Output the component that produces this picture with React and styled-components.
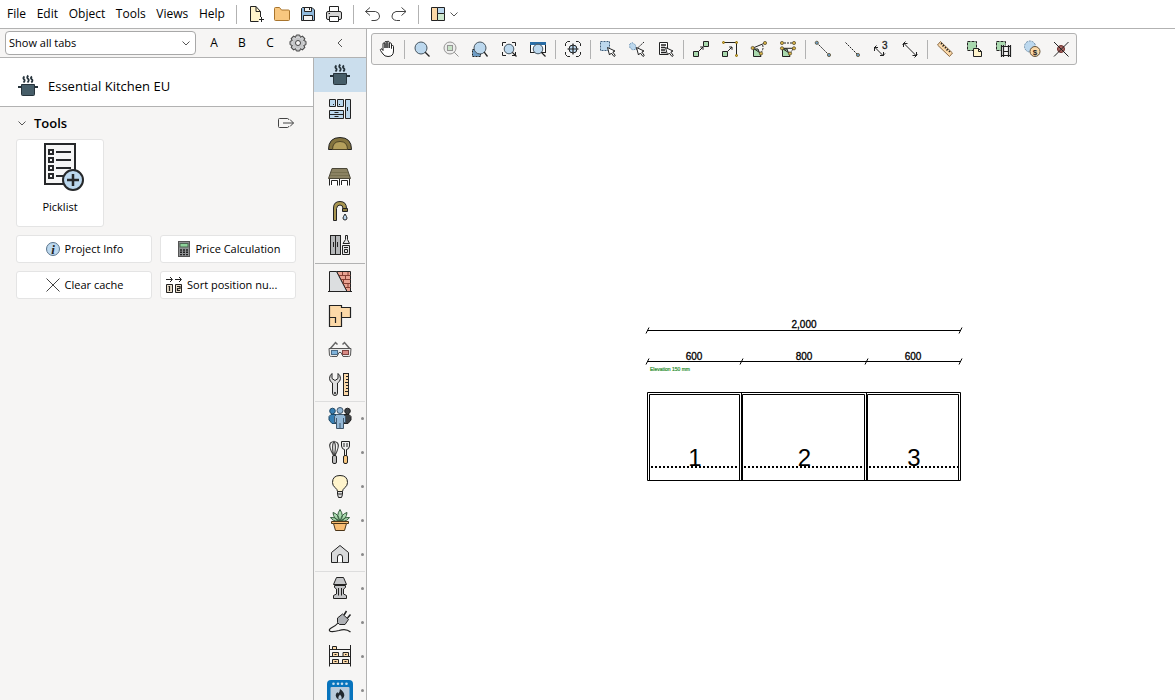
import React, { useState } from 'react';
import styled, { createGlobalStyle } from 'styled-components';

const GlobalStyle = createGlobalStyle`
  * {
    box-sizing: border-box;
  }

  body {
    margin: 0;
    background: #ffffff;
    color: #000000;
    font-family: 'Open Sans', 'Noto Sans', sans-serif;
    font-size: 12px;
    line-height: 16px;
  }

  button, select {
    font: inherit;
    color: inherit;
  }
`;

const AppContainer = styled.div`
  display: flex;
  flex-direction: column;
  height: 100vh;
  overflow: hidden;
`;

const MenuBar = styled.header`
  display: flex;
  align-items: center;
  flex: none;
  height: 29px;
  padding-left: 2px;
  border-bottom: 1px solid #b2b2b2;
  background: #ffffff;
`;

const MenuNav = styled.nav`
  display: flex;
  justify-content: space-between;
  flex: none;
  width: 228px;
`;

const MenuButton = styled.button`
  padding: 0 5px;
  border: none;
  background: none;
`;

const IconButton = styled.button`
  display: flex;
  align-items: center;
  justify-content: center;
  flex: none;
  width: ${({ $width }) => $width || 26}px;
  height: ${({ $height }) => $height || 26}px;
  padding: 0;
  border: none;
  background: none;

  svg {
    flex: none;
  }

  &:hover {
    background: #e2edf6;
  }
`;

const ToolbarButton = styled(IconButton)`
  justify-content: flex-start;
  padding-left: 5px;
`;

const BarDivider = styled.span`
  flex: none;
  width: 1px;
  height: 19px;
  margin: ${({ $tight }) => ($tight ? '0 2px 0 3px' : '0 6px')};
  background: #b2b2b2;
`;

const Workspace = styled.div`
  display: flex;
  flex: 1;
  min-height: 0;
`;

const SideArea = styled.aside`
  display: flex;
  flex-direction: column;
  flex: none;
  width: 367px;
  border-right: 1px solid #b2b2b2;
  background: #f6f5f4;
`;

const FilterBar = styled.div`
  display: flex;
  align-items: center;
  flex: none;
  height: 29px;
  padding-left: 5px;
  border-bottom: 1px solid #b2b2b2;
`;

const SelectBox = styled.div`
  display: grid;
  align-items: center;
  flex: none;
  width: 191px;
  margin-right: 4px;

  select, svg {
    grid-area: 1 / 1;
  }

  svg {
    justify-self: end;
    margin-right: 5px;
    pointer-events: none;
  }
`;

const TabSelect = styled.select`
  appearance: none;
  width: 100%;
  height: 24px;
  padding: 0 20px 0 3px;
  border: 1px solid #a8a8a8;
  border-radius: 4px;
  background: #ffffff;
  font-size: 11px;
`;

const LetterButton = styled.button`
  width: 28px;
  height: 24px;
  padding: 0;
  border: none;
  background: none;
  font-size: 12px;
`;

const FilterSpacer = styled.span`
  flex: 1;
`;

const SideBody = styled.div`
  display: flex;
  flex: 1;
  min-height: 0;
`;

const Panel = styled.section`
  display: flex;
  flex-direction: column;
  flex: 1;
  min-width: 0;
`;

const PanelTitle = styled.h1`
  display: flex;
  align-items: center;
  gap: 8px;
  height: 49px;
  margin: 0;
  padding: 8px 0 0 16px;
  border-bottom: 1px solid #b2b2b2;
  background: #ffffff;
  font-size: 13px;
  font-weight: 400;
`;

const ToolsSection = styled.div`
  padding: 0 17px 0 16px;
`;

const ToolsHeader = styled.div`
  display: flex;
  align-items: center;
  gap: 6px;
  height: 32px;

  h2 {
    flex: 1;
    margin: 0;
    font-size: 13px;
    font-weight: 600;
  }
`;

const TileButton = styled.button`
  display: flex;
  flex-direction: column;
  align-items: center;
  gap: 7px;
  width: 88px;
  height: 88px;
  padding: 2px 0 0;
  border: 1px solid #e4e4e4;
  border-radius: 3px;
  background: #ffffff;
  font-size: 11px;
`;

const ToolGrid = styled.div`
  display: grid;
  grid-template-columns: 1fr 1fr;
  gap: 8px;
  padding-top: 8px;
`;

const ToolButton = styled.button`
  display: flex;
  align-items: center;
  justify-content: ${({ $long }) => ($long ? 'flex-start' : 'center')};
  gap: 4px;
  min-width: 0;
  height: 28px;
  padding: 0 4px;
  border: 1px solid #e4e4e4;
  border-radius: 3px;
  background: #ffffff;
  font-size: 11px;
  white-space: nowrap;

  svg {
    flex: none;
  }
`;

const TabRail = styled.nav`
  display: flex;
  flex-direction: column;
  flex: none;
  width: 53px;
  border-left: 1px solid #b2b2b2;
  overflow: hidden;
`;

const RailButton = styled.button`
  display: grid;
  grid-template-columns: 14px 24px 14px;
  align-items: center;
  justify-items: center;
  flex: none;
  height: 34px;
  padding: 0;
  border: none;
  background: ${({ $active }) => ($active ? '#cbdeed' : 'none')};

  svg {
    grid-column: 2;
    overflow: visible;
  }
`;

const RailDot = styled.i`
  grid-column: 3;
  width: 3px;
  height: 3px;
  margin-left: 6px;
  border-radius: 50%;
  background: #8a8a8a;
`;

const RailDivider = styled.span`
  flex: none;
  height: 1px;
  margin: ${({ $strong }) => ($strong ? '1px 1px' : '0 1px -1px')};
  background: ${({ $strong }) => ($strong ? '#b2b2b2' : '#dddddd')};
`;

const Canvas = styled.main`
  display: flex;
  flex-direction: column;
  align-items: flex-start;
  flex: 1;
  min-width: 0;
  padding: 4px;
`;

const Toolbar = styled.div`
  display: flex;
  align-items: center;
  height: 32px;
  padding-right: 1px;
  border: 1px solid #b2b2b2;
  border-radius: 3px;
  background: #f6f5f4;
`;

const DrawingArea = styled.div`
  padding: 250px 0 0 269px;

  svg {
    display: block;
  }
`;

const INK = '#222222';
const BLUE = '#bcd8ee';
const GREEN = '#a9d9ae';
const SAND = '#fcd9a8';
const GOLD = '#d9b445';

const Svg = ({ size = 20, children, ...rest }) => (
  <svg width={size} height={size} viewBox={`0 0 ${size} ${size}`} fill="none" stroke={INK} strokeWidth="1" aria-hidden="true" {...rest}>
    {children}
  </svg>
);

const Chevron = ({ d = 'M1.5 3.5L5 7L8.5 3.5' }) => (
  <Svg size={10} stroke="#555555"><path d={d} /></Svg>
);

const Cursor = () => (
  <path d="M9.5 8.5L11.5 16L13.3 14L16 17.5L17.3 16.5L14.8 13L17 12Z" fill="#ffffff" />
);

/* menu bar icons, 20 x 20 */
const menuIcons = {
  'New': (
    <>
      <path d="M14.5 13V7.5L10 2.5H4.5V17.5H12.5" fill="#fff4cc" />
      <path d="M10 2.5V7.5H14.5M15.5 13V18M13 15.5H18" />
    </>
  ),
  'Open': <path d="M2.5 4.5Q2.5 3.5 3.5 3.5H7.5L9.5 6H16.5Q17.5 6 17.5 7V15.5Q17.5 16.5 16.5 16.5H3.5Q2.5 16.5 2.5 15.5Z" fill="#f8c77f" stroke="#a8742c" />,
  'Save': (
    <>
      <path d="M3.5 4.5L4.5 3.5H14L16.5 6V16.5H3.5Z" fill="#8fb9dc" />
      <path d="M6.5 3.5H13.5V7.5H6.5ZM5.5 11.5H14.5V16.5H5.5Z" fill="#f3f3f3" />
      <path d="M11.5 4V6" />
    </>
  ),
  'Print': (
    <>
      <path d="M5.5 8V2.5H14.5V8" fill="#ffffff" />
      <rect x="2.5" y="7.5" width="15" height="8" rx="1.5" fill="#d5d5d5" />
      <path d="M5.5 12.5H14.5V17.5H5.5Z" fill="#ffffff" />
      <path d="M4.5 9.5H6" />
    </>
  ),
  'Undo': <path d="M7 3.5L2.5 7.5L7 11.5M2.5 7.5H12.5Q16.5 8.5 16.5 12Q16.5 16 12 16.5H8.5" stroke="#444444" />,
  'Redo': <path d="M12.5 3.5L17 7.5L12.5 11.5M17 7.5H7Q3 8.5 3 12Q3 16 7.5 16.5H11" stroke="#444444" />,
  'Layout': (
    <>
      <path d="M3.5 3.5H9.5V16.5H3.5Z" fill={SAND} />
      <path d="M9.5 3.5H16.5V9.5H9.5Z" fill={BLUE} />
      <path d="M9.5 9.5H16.5V16.5H9.5Z" fill="#cfe9d0" />
    </>
  ),
};

const Lens = ({ cx = 9, cy = 9, r = 6 }) => (
  <>
    <circle cx={cx} cy={cy} r={r} fill={BLUE} stroke="#46545f" />
    <path d={`M${cx + r * 0.7} ${cy + r * 0.7}L17.5 17.5`} strokeWidth="1.3" />
  </>
);

const Point = ({ x, y, fill = GOLD }) => <circle cx={x} cy={y} r="1.6" fill={fill} stroke="#5c5132" strokeWidth="0.8" />;

const HAND = 'M6 11.5V5Q6 3.8 7 3.8T8 5V9V3.5Q8 2.3 9 2.3T10 3.5V9V3.2Q10 2.2 11 2.2T12.2 3.2V9V4.8Q12.2 3.8 13.2 3.8T14.5 4.8V9.5V7.5Q14.5 6.5 15.5 6.5T16.5 7.5V12Q16.5 17.5 11 17.5Q7.5 17.5 6 15L3.5 11.5Q3 10.3 4 9.8Q5 9.5 6 11.5Z';

/* drawing toolbar, grouped between dividers */
const toolGroups = [
  [['Pan', <path d={HAND} fill="#ffffff" />]],
  [
    ['Zoom', <Lens />],
    ['Zoom selection', (
      <g opacity="0.45">
        <circle cx="9" cy="9" r="6" fill="#e4e4e4" />
        <rect x="6.5" y="6.5" width="5" height="5" fill="#8fce8f" />
        <path d="M13.2 13.2L17.5 17.5" />
      </g>
    )],
    ['Zoom area', (
      <>
        <rect x="2.5" y="10.5" width="8" height="7" fill="#6d9cc4" strokeDasharray="2 1" />
        <Lens cx={10} />
      </>
    )],
    ['Zoom to fit', (
      <>
        <path d="M3.5 7V3.5H7M13 3.5H16.5V7M3.5 13V16.5H7M13 16.5H16.5V13" />
        <Lens cx={10} cy={10} r={4.8} />
      </>
    )],
    ['Zoom window', (
      <>
        <rect x="2.5" y="3.5" width="15" height="10" fill="#ffffff" />
        <path d="M2 4.5H18" stroke="#2b6ea6" strokeWidth="3" />
        <Lens cx={10} cy={10} r={4.8} />
      </>
    )],
  ],
  [['Center view', (
    <>
      <path d="M2.5 7V4.5L4.5 2.5H7M13 2.5H15.5L17.5 4.5V7M2.5 13V15.5L4.5 17.5H7M13 17.5H15.5L17.5 15.5V13" />
      <circle cx="10" cy="10" r="4" fill={BLUE} />
      <path d="M10 4.5V15.5M4.5 10H15.5" strokeWidth="1.2" />
    </>
  )]],
  [
    ['Select by frame', (
      <>
        <rect x="2.5" y="2.5" width="9" height="9" fill={BLUE} stroke="#3f5f7c" strokeDasharray="2 1" />
        <Cursor />
      </>
    )],
    ['Select by line', (
      <>
        <path d="M2.5 5.5L5 3.5L8.5 6L9 10L6 11L3 9Z" fill={BLUE} stroke="#7297b8" strokeDasharray="2 1" />
        <path d="M9 10.5L17 3" strokeDasharray="2 1" />
        <Cursor />
      </>
    )],
    ['Select from list', (
      <>
        <path d="M3.5 3.5H11.5V15.5H3.5Z" fill="#ffffff" />
        <path d="M5 6H10M5 8.5H9M5 11H9M5 13.5H10" strokeWidth="1.3" />
        <Cursor />
      </>
    )],
  ],
  [
    ['Move', (
      <>
        <path d="M2.5 12.5H7.5V17.5H2.5ZM12.5 2.5H17.5V7.5H12.5Z" fill={GREEN} />
        <path d="M7.5 12.5L12 8M9.2 8H12V10.8" />
      </>
    )],
    ['Move to corner', (
      <>
        <path d="M2.5 12.5H7.5V17.5H2.5Z" fill={GREEN} />
        <path d="M7.5 12.5L12 8M9.2 8H12V10.8M3.5 3.5H16.5V16.5" />
        <circle cx="3.5" cy="3.5" r="1" fill={GOLD} stroke="#8a6a00" />
        <circle cx="16.5" cy="3.5" r="1" fill={GOLD} stroke="#8a6a00" />
        <circle cx="16.5" cy="16.5" r="1" fill={GOLD} stroke="#8a6a00" />
      </>
    )],
    ['Rotate', (
      <>
        <path d="M4.5 10V17.5H12L9 10Z" fill={GREEN} />
        <path d="M4 9L16 4M4 9L12 14.5" />
        <path d="M13.5 6Q15 9 12.5 13" strokeDasharray="2 1" />
        <Point x={3.7} y={9} /><Point x={16} y={4} /><Point x={12} y={14.5} />
      </>
    )],
    ['Rotate and move', (
      <>
        <path d="M4.5 10V17.5H12L9 10Z" fill={GREEN} />
        <path d="M4 9.3H16M4 9.3L12 14.5" />
        <path d="M6 4H14M15 10L12.5 14" strokeDasharray="2 1" />
        <Point x={4} y={4} /><Point x={16} y={4} /><Point x={4} y={9.3} /><Point x={16} y={9.3} /><Point x={12} y={14.5} />
      </>
    )],
  ],
  [
    ['Line', (
      <>
        <path d="M4 4L16 16" strokeDasharray="2 1" />
        <Point x={3.8} y={3.8} fill="#6d9cc4" /><Point x={16} y={16} fill="#6d9cc4" />
      </>
    )],
    ['Line to point', (
      <>
        <path d="M3.5 3.5L16 16" strokeDasharray="2 1" />
        <Point x={16} y={16} fill="#6d9cc4" />
      </>
    )],
    ['Three measures', (
      <>
        <path d="M4 8.5L12 16.5M3.5 12V8.5H7M12.5 13V16.5H9M5.5 6.5L3 9M14 14.5L11.5 17" />
        <text x="11" y="10" fontFamily="Liberation Sans, sans-serif" fontSize="10" fill={INK} strokeWidth="0.3">3</text>
      </>
    )],
    ['Measure', <path d="M4 4.5L16 16.5M3.5 8V4.5H7.5M16.5 13V16.5H12.5M5.5 2.5L2.5 5.5M17.5 15.5L14.5 18.5" />],
  ],
  [
    ['Ruler', (
      <>
        <path d="M5.5 2.5L17.5 14L14.5 17.5L2.5 6Z" fill={SAND} stroke="#8a6a45" />
        <path d="M7 4L5.8 5.3M9 6L7.5 7.5M11 8L9.8 9.3M13 9.8L11.5 11.5M15 11.8L13.8 13" strokeWidth="1.2" />
      </>
    )],
    ['Copy area', (
      <>
        <rect x="3.5" y="2.5" width="9" height="9" fill={GREEN} strokeDasharray="3 1" />
        <path d="M9.5 9.5H14.5L17.5 12.5V17.5H9.5Z" fill="#fff4cc" />
        <path d="M14.5 9.5V12.5H17.5" />
      </>
    )],
    ['Copy to film', (
      <>
        <rect x="3.5" y="2.5" width="9" height="9" fill={GREEN} strokeDasharray="3 1" />
        <path d="M8 6.5H18V17.5H8Z" fill="#f6f5f4" stroke="none" />
        <path d="M8.5 6V18M10.5 6V18M15.5 6V18M17.5 6V18M8.5 7.5H17.5M10.5 12.5H15.5M8.5 16.5H17.5" strokeWidth="1.2" />
      </>
    )],
    ['Area price', (
      <>
        <circle cx="8" cy="7.5" r="5.5" fill={BLUE} stroke="#6f8ea8" strokeDasharray="2 1" />
        <circle cx="13" cy="12.5" r="5" fill={SAND} stroke="#66533a" />
        <text x="13" y="15.5" textAnchor="middle" fontFamily="Liberation Sans, sans-serif" fontSize="8" fontWeight="700" fill={INK} stroke="none">$</text>
      </>
    )],
    ['Delete point', (
      <>
        <circle cx="10" cy="10" r="3.5" fill="#a96561" stroke="#6b2b28" />
        <path d="M3 3L17.5 17.5M17.5 3L3 17.5" />
      </>
    )],
  ],
];

const PotIcon = () => (
  <>
    <path d="M8.5 2.5Q6.5 4 8 5.2T7.5 8.5M12.3 1.5Q10.3 3.5 12 4.8T11.5 8.5M16 2.5Q14 4 15.7 5.2T15.3 8.5" strokeWidth="1.8" stroke="#26333b" />
    <path d="M2 13H22" stroke="#26333b" strokeWidth="2" />
    <path d="M5.5 10.5H18.5V20.5Q18.5 21.5 17.5 21.5H6.5Q5.5 21.5 5.5 20.5Z" fill="#465d68" stroke="#26333b" />
  </>
);

/* catalogue tabs, 24 x 24; a plain string is a divider */
const railItems = [
  ['Kitchen', <PotIcon />],
  ['Cabinets', (
    <>
      <path d="M1.5 2.5H7.5V9.5H1.5ZM9.5 2.5H15.5V9.5H9.5ZM17.5 2.5H22.5V21.5H17.5ZM1.5 13.5H15.5V21.5H1.5Z" fill={BLUE} />
      <path d="M1.5 17.5H15.5M6.5 15.5H10.5M6.5 19.5H10.5M5.5 7V8M11.5 7V8M19.5 10V14" />
    </>
  )],
  ['Worktops', (
    <>
      <path d="M0.5 18.5Q0.5 6.5 12 6.5T23.5 18.5Z" fill="#84743f" />
      <path d="M4.5 18.5Q4.5 10.5 12 10.5T19.5 18.5Z" fill="#b5a05c" stroke="#4e4425" />
    </>
  )],
  ['Hoods', (
    <>
      <path d="M2 14H21V20.5H2Z" fill="#ffffff" stroke="none" />
      <path d="M4 3.5H19L22.5 13.5H0.5Z" fill="#8b8263" stroke="#4b4738" />
      <path d="M3 7.5H20M2 10.5H21" stroke="#777050" />
      <path d="M1.5 14V20.5M11.5 14V20.5M21.5 14V20.5M3.5 20V15.5H9.5V20.5M13.5 20V15.5H19.5V20.5" />
    </>
  )],
  ['Taps', (
    <>
      <path d="M5.5 21.5V9Q5.5 2.5 12 2.5T18.5 9.5H15Q15 6 12 6T8.5 9.5V21.5Z" fill="#a89550" />
      <path d="M14.5 9.5H19.5V12.5H14.5Z" fill="#8b7a3d" />
      <path d="M17 15Q19 18 19 19A2 2 0 0 1 15 19Q15 18 17 15Z" fill={BLUE} />
    </>
  )],
  ['Appliances', (
    <>
      <rect x="2.5" y="2.5" width="10" height="19" fill="#b5b7b9" />
      <path d="M7.5 2.5V21.5M5.5 9V14M9.5 9V14" />
      <path d="M17.5 2.5H19.5V6.5L21.5 10.5H15L17.5 6.5ZM14.5 12.5H21.5V21.5H14.5Z" fill="#e5e5e5" />
      <path d="M16.5 16.5H19.5V19.5H16.5ZM16 14.5H20" />
    </>
  )],
  'strong',
  ['Walls', (
    <>
      <path d="M8.5 1.5H22.5V21.5H19Z" fill="#e9a392" />
      <path d="M1.5 1.5H8.5L19 21.5H1.5Z" fill="#dcdee0" />
      <path d="M10.5 5.5H22.5M12.5 9.5H22.5M14.5 13.5H22.5M17 17.5H22.5M14.5 2V5.5M17.5 5.5V9.5M15.5 9.5V13.5M20 13.5V17.5M20 2V5.5" stroke="#863f32" />
      <path d="M0 21.5H24" />
    </>
  )],
  ['Floor plan', <path d="M1.5 1.5H13.5V3.5H22.5V13.5H13.5V22.5H1.5ZM13.5 8V14M2 13.5H7.5V19" fill={SAND} strokeWidth="1.2" />],
  ['3D view', (
    <>
      <path d="M2 11L7.5 4.5L9.5 6.5M22 11L16.5 4.5L14.5 6.5" stroke="#666666" strokeWidth="1.5" />
      <path d="M1 10.5H23L22.5 17.5Q22 18.5 20.5 18.5H15L13 14.5H11L9 18.5H3.5Q2 18.5 1.5 17.5Z" fill="#e8e8e8" stroke="#555555" />
      <rect x="3.5" y="12.5" width="6" height="4" fill="#80b4dc" stroke="#4a6a85" />
      <rect x="14.5" y="12.5" width="6" height="4" fill="#d98a84" stroke="#7d4340" />
    </>
  )],
  ['Settings', (
    <>
      <path d="M4 1.5V6.5L7 8.5L10 6.5V1.5Q12.5 3.5 12.5 6.5Q12.3 9.5 9.5 11V21Q9.5 23.5 7 23.5T4.5 21V11Q1.5 9.5 1.5 6.5T4 1.5Z" fill="#dedede" />
      <circle cx="7" cy="21" r="0.7" />
      <rect x="15.5" y="1.5" width="5" height="22" fill={SAND} />
      <path d="M18 4.5H20.5M18 7.5H20.5M17 10.5H20.5M18 13.5H20.5M18 16.5H20.5M17 19.5H20.5" />
    </>
  )],
  'light',
  ['People', (
    <>
      <circle cx="4.5" cy="5" r="2.8" fill="#387fb3" stroke="#1f4966" />
      <circle cx="19.5" cy="5" r="2.8" fill="#3c3f42" />
      <path d="M3 8.5H9V17.5H4L1 14V10.5Z" fill="#387fb3" stroke="#1f4966" />
      <path d="M15 8.5H21L23 10.5V14L20 17.5H15Z" fill="#3c3f42" />
      <path d="M8.5 8.5H15.5L17.5 10.5V16.5H15.5V22.5H8.5V16.5H6.5V10.5Z" fill="#94b8d6" stroke="#40566a" />
      <circle cx="12" cy="4.5" r="3" fill="#94b8d6" stroke="#40566a" />
      <path d="M12 17V22.5M8.5 12V16.5M15.5 12V16.5" stroke="#40566a" />
    </>
  ), true],
  ['Utensils', (
    <>
      <path d="M5.5 15.5Q0 6 2.5 3Q6 0 9.5 3Q12 6 7 15.5M5.5 15Q3.5 5 6 1.5Q8.5 5 6.5 15" stroke="#444444" strokeWidth="1.2" />
      <rect x="4.5" y="15.5" width="4" height="8" rx="1.5" fill="#bcbcbc" />
      <path d="M13.5 1.5H21.5V6Q21 9.5 18.5 9.5V15.5H16.5V9.5Q14 9.5 13.5 6ZM16 3V7M19 3V7" fill="#eeeeee" />
      <rect x="15.5" y="15.5" width="4" height="8" rx="1.5" fill="#f8c77f" />
    </>
  ), true],
  ['Lighting', (
    <>
      <path d="M9.5 17.5Q9.5 15.5 7 13.5Q4.5 11.5 4.5 8.5Q4.5 1.5 12 1.5T19.5 8.5Q19.5 11.5 17 13.5Q14.5 15.5 14.5 17.5Z" fill="#fff4cc" />
      <path d="M9.5 17.5H14.5V20.5L13.5 23.5H10.5L9.5 20.5ZM9.5 20H14.5" fill="#dedede" />
    </>
  ), true],
  ['Plants', (
    <>
      <path d="M12 13Q7.5 8 12 1.5Q16.5 8 12 13ZM11 13Q5.5 11 5 4.5Q10.5 6 11.5 12.5ZM13 13Q18.5 11 19 4.5Q13.5 6 12.5 12.5ZM10 13Q5 13.5 2.5 9.5Q7 8.5 10.5 12.5ZM14 13Q19 13.5 21.5 9.5Q17 8.5 13.5 12.5Z" fill={GREEN} stroke="#355b3d" />
      <path d="M3.5 13.5H20.5V15.5H18.5L16.5 22.5H7.5L5.5 15.5H3.5ZM5.5 15.5H18.5" fill="#f8bd73" stroke="#4b3417" />
    </>
  ), true],
  ['Building', (
    <>
      <path d="M12 3.5L3.5 10.5V20.5H20.5V10.5Z" fill="#d9dadb" />
      <path d="M9.5 20.5V15A2.5 2.5 0 0 1 14.5 15V20.5" fill="#ffffff" />
    </>
  ), true],
  'light',
  ['Furniture legs', (
    <>
      <path d="M6.5 9.5H17.5V11.5L15.5 13V18L18.5 19.5V22.5H5.5V19.5L8.5 18V13L6.5 11.5Z" fill="#c6c7c9" />
      <path d="M8.5 1.5H15.5L18.5 8.5H5.5Z" fill="#c6c7c9" />
      <path d="M10.5 12V19.5M13.5 12V19.5" />
    </>
  ), true],
  ['Electric', (
    <>
      <path d="M9.5 8L14.5 4L20.5 9.5L17 14.5H11.5L9.5 12.5Z" fill="#aeb0b4" />
      <path d="M16 5L18.5 1M19.5 8L22.5 4.5" strokeWidth="1.5" />
      <path d="M10 13Q8 15.5 4 17.5Q-0.5 20 2.5 21.5Q6 22 11 20.5Q18 18 22.5 22" strokeWidth="1.2" />
    </>
  ), true],
  ['Shelving', (
    <>
      <path d="M4.5 2.5H8.5V5.5H4.5ZM4.5 8.5H10.5V12.5H4.5ZM15 8.5H20.5V12.5H15ZM4.5 15.5H10.5V19.5H4.5ZM14.5 15.5H20.5V19.5H14.5Z" fill={SAND} />
      <path d="M1.5 1V22.5M22.5 1V22.5M1.5 5.5H22.5M1.5 12.5H22.5M1.5 19.5H22.5" />
      <path d="M6.5 10.5H8.5M17 10.5H18.5M6.5 17.5H8.5M16.5 17.5H18.5" />
    </>
  ), true],
  ['Fire', (
    <>
      <rect x="-1" y="2" width="26" height="24" rx="4" fill="#0874bd" stroke="none" />
      {[5.5, 10, 14, 18.5].map((x) => (
        <circle key={x} cx={x} cy="5.8" r="1.3" fill="#c7dff0" stroke="none" />
      ))}
      <rect x="2.5" y="9" width="19" height="16" rx="1" fill="#b9cadb" stroke="none" />
      <path d="M12 11Q16.5 14 16.3 17.5Q15.5 21.5 12 21.5T7.7 17.5Q7.5 15.5 9.5 14L10 15.5Q12 14 12 11Z" fill="#20272e" stroke="none" />
      <path d="M12 16.5Q14 18.5 13.5 21H10.5Q10 18.5 12 16.5Z" fill="#b9cadb" stroke="none" />
    </>
  ), true],
];

const teeth = [0, 45, 90, 135, 180, 225, 270, 315];

const GearIcon = () => (
  <Svg size={18}>
    {teeth.map((a) => (
      <path key={a} d="M6.5 3.5L7.3 1H10.7L11.5 3.5" fill="#c4c5c7" stroke="#444444" transform={`rotate(${a} 9 9)`} />
    ))}
    <circle cx="9" cy="9" r="5.6" fill="#c4c5c7" stroke="none" />
    <circle cx="9" cy="9" r="2.5" fill="#f6f5f4" stroke="#444444" />
  </Svg>
);

const PicklistIcon = () => (
  <svg width="48" height="50" viewBox="0 0 48 50" fill="none" stroke="#26282a" strokeWidth="2" aria-hidden="true">
    <path d="M9 2H39V42H9Z" fill="#f6f6f6" />
    {[8, 16, 24, 32].map((y) => (
      <g key={y}>
        <rect x="13" y={y} width="4" height="4" />
        <path d={`M20 ${y + 2}H35`} />
      </g>
    ))}
    <circle cx="37" cy="38" r="10" fill={BLUE} />
    <path d="M37 32V44M31 38H43" strokeWidth="2.5" />
  </svg>
);

const gridTools = [
  ['Project Info', (
    <Svg size={16}>
      <circle cx="8" cy="8" r="6.5" fill={BLUE} stroke="#59748c" />
      <text x="8" y="12.5" textAnchor="middle" fontFamily="Liberation Serif, serif" fontStyle="italic" fontWeight="700" fontSize="13" fill={INK} stroke="none">i</text>
    </Svg>
  )],
  ['Price Calculation', (
    <Svg size={16}>
      <rect x="2.5" y="0.5" width="11" height="15" fill="#8f9193" stroke="#555555" />
      <rect x="4" y="2.5" width="8" height="3.5" fill="#8ed39a" stroke="#4e6653" />
      <path d="M4 9H12M4 11.3H12M4 13.6H12" strokeDasharray="2 1" strokeWidth="1.4" />
    </Svg>
  )],
  ['Clear cache', <Svg size={16}><path d="M1.5 1.5L14.5 14.5M14.5 1.5L1.5 14.5" stroke="#444444" /></Svg>],
  ['Sort position nu...', (
    <Svg size={18}>
      <path d="M1 3.5H7M5 1L7.5 3.5L5 6M10 3.5H16M14 1L16.5 3.5L14 6" />
      <path d="M1.5 8.5H7.5V16.5H1.5ZM10.5 8.5H16.5V16.5H10.5Z" fill="#eadfcb" />
      <path d="M3.5 10.5H4.5V15M12 10.5H15V12.5H12.5V14.5H15" strokeWidth="1.2" />
    </Svg>
  ), true],
];

/* inset: gap between a cabinet's outer and inner left edge */
const cabinets = [
  { no: 1, x: 7, width: 94, inset: 2 },
  { no: 2, x: 101, width: 125, inset: 1 },
  { no: 3, x: 226, width: 94, inset: 1 },
];

const Elevation = () => (
  <svg width="330" height="170" viewBox="0 0 330 170" fill="none" stroke="#000000" fontFamily="Liberation Sans, Arial, sans-serif" role="img" aria-label="Wall elevation">
    <path d="M7.5 15.5H320.5M7.5 46.5H320.5" />
    {[[7.5, 15.5], [320.5, 15.5], [7.5, 46.5], [101.5, 46.5], [226.5, 46.5], [320.5, 46.5]].map(([x, y]) => (
      <path key={`${x}-${y}`} d={`M${x - 1.5} ${y + 3}L${x + 1.5} ${y - 3}`} />
    ))}
    <g fill="#000000" strokeWidth="0.3" fontSize="10" textAnchor="middle">
      <text x="164" y="13">2,000</text>
      <text x="54" y="45">600</text>
      <text x="164" y="45">800</text>
      <text x="273" y="45">600</text>
    </g>
    <text x="10" y="56" fontSize="5" fill="#2b8f30" stroke="#2b8f30" strokeWidth="0.2">Elevation 150 mm</text>
    <path d="M7.5 165.5V77.5H320.5V165.5Z" />
    {cabinets.map(({ no, x, width, inset }) => (
      <g key={no}>
        <path d={`M${x + 0.5} 78V165M${x + inset + 0.5} 165V79.5H${x + width - 1.5}V165`} />
        <path d={`M${x + inset + 2} 152H${x + width - 2}`} strokeWidth="2" strokeDasharray="2 2" />
        <text x={x + width / 2 + 1} y="151" fontSize="24" textAnchor="middle" fill="#000000" stroke="none">{no}</text>
      </g>
    ))}
  </svg>
);

const menuButton = (name) => (
  <IconButton key={name} aria-label={name}>
    <Svg>{menuIcons[name]}</Svg>
  </IconButton>
);

const App = () => {
  const [activeTab, setActiveTab] = useState('Kitchen');

  return (
    <AppContainer>
      <GlobalStyle />
      <MenuBar>
        <MenuNav>
          {['File', 'Edit', 'Object', 'Tools', 'Views', 'Help'].map((name) => (
            <MenuButton key={name}>{name}</MenuButton>
          ))}
        </MenuNav>
        <BarDivider />
        {['New', 'Open', 'Save', 'Print'].map(menuButton)}
        <BarDivider />
        {['Undo', 'Redo'].map(menuButton)}
        <BarDivider />
        {menuButton('Layout')}
        <IconButton $width={6} aria-label="Layout options"><Chevron /></IconButton>
      </MenuBar>

      <Workspace>
        <SideArea>
          <FilterBar>
            <SelectBox>
              <TabSelect aria-label="Tab filter">
                <option>Show all tabs</option>
              </TabSelect>
              <Chevron />
            </SelectBox>
            {['A', 'B', 'C'].map((letter) => (
              <LetterButton key={letter}>{letter}</LetterButton>
            ))}
            <IconButton $width={28} aria-label="Filter settings"><GearIcon /></IconButton>
            <FilterSpacer />
            <IconButton $width={52} aria-label="Collapse"><Chevron d="M7 1L3 5L7 9" /></IconButton>
          </FilterBar>

          <SideBody>
            <Panel>
              <PanelTitle>
                <Svg size={24}><PotIcon /></Svg>
                Essential Kitchen EU
              </PanelTitle>
              <ToolsSection>
                <ToolsHeader>
                  <IconButton $width={12} $height={20} aria-label="Fold tools"><Chevron /></IconButton>
                  <h2>Tools</h2>
                  <IconButton $width={20} $height={20} aria-label="Detach tools">
                    <Svg stroke="#444444">
                      <path d="M12.5 7V6.5Q12.5 5.5 11.5 5.5H3.5Q2.5 5.5 2.5 6.5V13.5Q2.5 14.5 3.5 14.5H11.5Q12.5 14.5 12.5 13.5V13M7 10H17.5M14 6.5L17.5 10L14 13.5" />
                    </Svg>
                  </IconButton>
                </ToolsHeader>
                <TileButton>
                  <PicklistIcon />
                  Picklist
                </TileButton>
                <ToolGrid>
                  {gridTools.map(([name, icon, long]) => (
                    <ToolButton key={name} $long={long}>
                      {icon}
                      <span>{name}</span>
                    </ToolButton>
                  ))}
                </ToolGrid>
              </ToolsSection>
            </Panel>

            <TabRail>
              {railItems.map((item, i) => {
                if (typeof item === 'string') {
                  return <RailDivider key={i} $strong={item === 'strong'} />;
                }
                const [name, icon, hasMore] = item;
                return (
                  <RailButton key={name} aria-label={name} $active={name === activeTab} onClick={() => setActiveTab(name)}>
                    <Svg size={24}>{icon}</Svg>
                    {hasMore && <RailDot />}
                  </RailButton>
                );
              })}
            </TabRail>
          </SideBody>
        </SideArea>

        <Canvas>
          <Toolbar>
            {toolGroups.map((group, i) => (
              <React.Fragment key={i}>
                {i > 0 && <BarDivider $tight />}
                {group.map(([name, icon]) => (
                  <ToolbarButton key={name} $width={29} aria-label={name}>
                    <Svg>{icon}</Svg>
                  </ToolbarButton>
                ))}
              </React.Fragment>
            ))}
          </Toolbar>
          <DrawingArea>
            <Elevation />
          </DrawingArea>
        </Canvas>
      </Workspace>
    </AppContainer>
  );
};

export default App;
